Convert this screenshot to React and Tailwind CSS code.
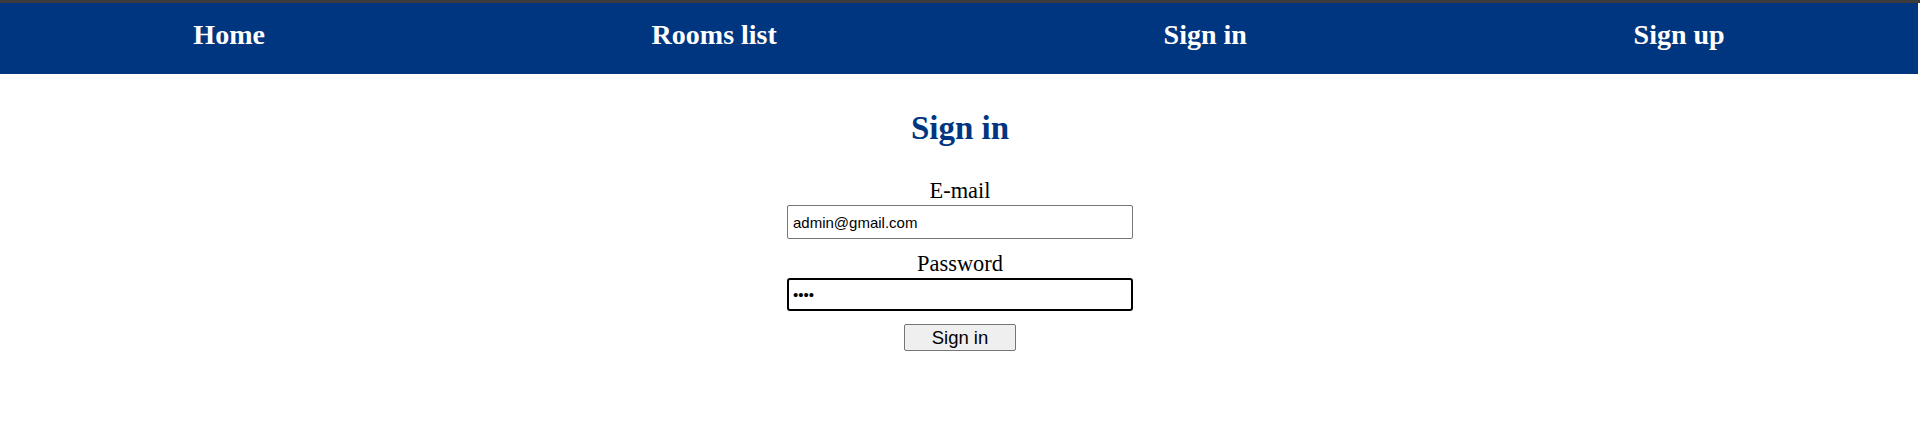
import { useState } from 'react';

const links = ['Home', 'Rooms list', 'Sign in', 'Sign up'];

function NavBar() {
  return (
    <nav className="mr-[2px] flex h-[71px] items-start justify-around bg-[#003580] pt-[16px]">
      {links.map((label) => (
        <a
          key={label}
          href="#"
          className="text-[28px] font-bold leading-[32px] text-white no-underline"
        >
          {label}
        </a>
      ))}
    </nav>
  );
}

export default function App() {
  const [email, setEmail] = useState('admin@gmail.com');
  const [password, setPassword] = useState('1234');

  return (
    <div className="min-h-[423px] bg-white font-['Liberation_Serif','Times_New_Roman',serif]">
      <div className="h-[3px] bg-[#3c3c3c]" />
      <NavBar />
      <main className="flex flex-col items-center">
        <h1 className="mt-[36px] text-[33px] font-bold leading-[37px] text-[#003580]">Sign in</h1>
        <form className="mt-[31px] flex flex-col items-center" onSubmit={(e) => e.preventDefault()}>
          <label htmlFor="email" className="text-[22.4px] leading-[26px] text-black">
            E-mail
          </label>
          <input
            id="email"
            type="email"
            value={email}
            onChange={(e) => setEmail(e.target.value)}
            className="mt-[1px] h-[34px] w-[346px] rounded-[2px] border border-[#767676] px-[5px] font-['Liberation_Sans',Arial,sans-serif] text-[15px] text-black outline-none"
          />
          <label htmlFor="password" className="mt-[12px] text-[22.4px] leading-[26px] text-black">
            Password
          </label>
          <input
            id="password"
            type="password"
            value={password}
            onChange={(e) => setPassword(e.target.value)}
            className="mt-[1px] h-[33px] w-[346px] rounded-[3px] border-2 border-black px-[4px] font-['Liberation_Sans',Arial,sans-serif] text-[15px] text-black outline-none"
          />
          <button
            type="submit"
            className="mt-[13px] h-[27px] w-[112px] rounded-[2px] border border-[#767676] bg-[#efefef] font-['Liberation_Sans',Arial,sans-serif] text-[18.5px] leading-[20px] text-black"
          >
            Sign in
          </button>
        </form>
      </main>
    </div>
  );
}
